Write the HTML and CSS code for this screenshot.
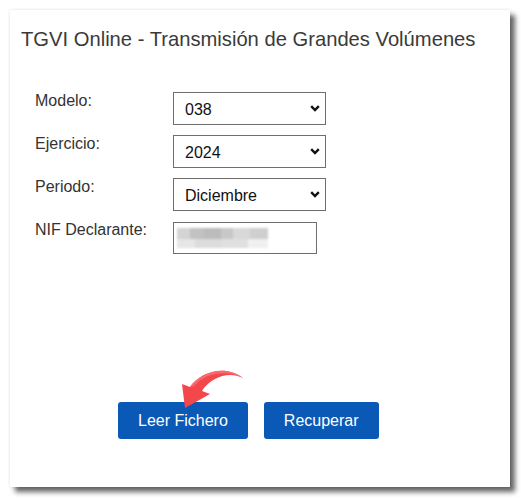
FILE: index.html
```html
<!DOCTYPE html>
<html lang="es">
<head>
<meta charset="utf-8">
<title>TGVI Online</title>
<link rel="stylesheet" href="styles.css">
</head>
<body>
<div class="card">
  <h1 class="title">TGVI Online - Transmisión de Grandes Volúmenes</h1>
  <div class="form">
    <label class="lbl">Modelo:</label>
    <div class="sel">
      <select class="ctl"><option>038</option></select>
      <svg class="chev" width="10" height="7" viewBox="0 0 10 7"><path d="M1.2 1.2 L5 5 L8.8 1.2" fill="none" stroke="#111" stroke-width="2.4"/></svg>
    </div>
    <label class="lbl">Ejercicio:</label>
    <div class="sel">
      <select class="ctl"><option>2024</option></select>
      <svg class="chev" width="10" height="7" viewBox="0 0 10 7"><path d="M1.2 1.2 L5 5 L8.8 1.2" fill="none" stroke="#111" stroke-width="2.4"/></svg>
    </div>
    <label class="lbl">Periodo:</label>
    <div class="sel">
      <select class="ctl"><option>Diciembre</option></select>
      <svg class="chev" width="10" height="7" viewBox="0 0 10 7"><path d="M1.2 1.2 L5 5 L8.8 1.2" fill="none" stroke="#111" stroke-width="2.4"/></svg>
    </div>
    <label class="lbl">NIF Declarante:</label>
    <div class="nif"><span class="blur"></span></div>
  </div>
  <div class="actions">
    <button class="btn">Leer Fichero</button>
    <button class="btn">Recuperar</button>
    <svg class="arrow" width="80" height="50" viewBox="170 362 80 50">
      <path d="M182 384 L190 387 C200 372 225 364 243 378 C229 371 211 377 202 391 L210 394 L185 408 Z" fill="#f4474c"/>
      <path d="M190 387 C200 372 225 364 243 378 C228 370 206 372 194 386 Z" fill="#f76a6e"/>
    </svg>
  </div>
</div>
</body>
</html>
```

FILE: styles.css
```css
html, body {
  margin: 0;
  padding: 0;
  background: #fff;
}
body {
  padding: 10px;
  font-family: "Liberation Sans", Arial, sans-serif;
  color: #333;
}
.card {
  width: 500px;
  height: 477px;
  box-sizing: border-box;
  background: #fff;
  box-shadow: 5px 5px 5px rgba(0, 0, 0, 0.6), 0 0 3px rgba(0, 0, 0, 0.12);
  padding: 18px 11px 0 11px;
  position: relative;
}
.title {
  margin: 0;
  font-size: 20.2px;
  font-weight: normal;
  line-height: 23px;
  color: #3a3a3a;
}
.form {
  margin: 41px 0 0 14px;
  display: grid;
  grid-template-columns: 138px auto;
  row-gap: 10px;
  align-items: start;
  justify-items: start;
}
.lbl {
  font-size: 16px;
  line-height: 18px;
  color: #333;
}
.sel {
  position: relative;
  height: 33px;
}
.ctl {
  appearance: none;
  -webkit-appearance: none;
  width: 153px;
  height: 33px;
  font-family: "Liberation Sans", Arial, sans-serif;
  font-size: 16px;
  color: #111;
  border: 1px solid #6e6e6e;
  border-radius: 0;
  background: #fff;
  padding: 2px 4px 0 11px;
}
.chev {
  position: absolute;
  right: 6px;
  top: 13px;
  pointer-events: none;
}
.nif {
  width: 144px;
  height: 32px;
  margin-top: 1px;
  box-sizing: border-box;
  border: 1px solid #6e6e6e;
  padding: 5px 0 0 3px;
}
.blur {
  display: block;
  width: 91px;
  height: 20px;
  background:
    linear-gradient(90deg, #d4d4d4 0 14%, #c2c2c2 14% 30%, #bcbcbc 30% 48%, #c8c8c8 48% 62%, #d8d8d8 62% 80%, #cfcfcf 80% 100%) top / 100% 55% no-repeat,
    linear-gradient(90deg, #e6e6e6 0 20%, #dcdcdc 20% 50%, #e0e0e0 50% 78%, #f0f0f0 78% 100%) bottom / 100% 45% no-repeat;
  filter: blur(1px);
}
.actions {
  margin: 148px 0 0 97px;
  display: flex;
  gap: 16px;
}
.btn {
  height: 37px;
  padding: 0 20px;
  background: #0a59b6;
  color: #fff;
  border: none;
  border-radius: 3px;
  font-family: "Liberation Sans", Arial, sans-serif;
  font-size: 16px;
}
.arrow {
  position: absolute;
  left: 160px;
  top: 352px;
}
```
